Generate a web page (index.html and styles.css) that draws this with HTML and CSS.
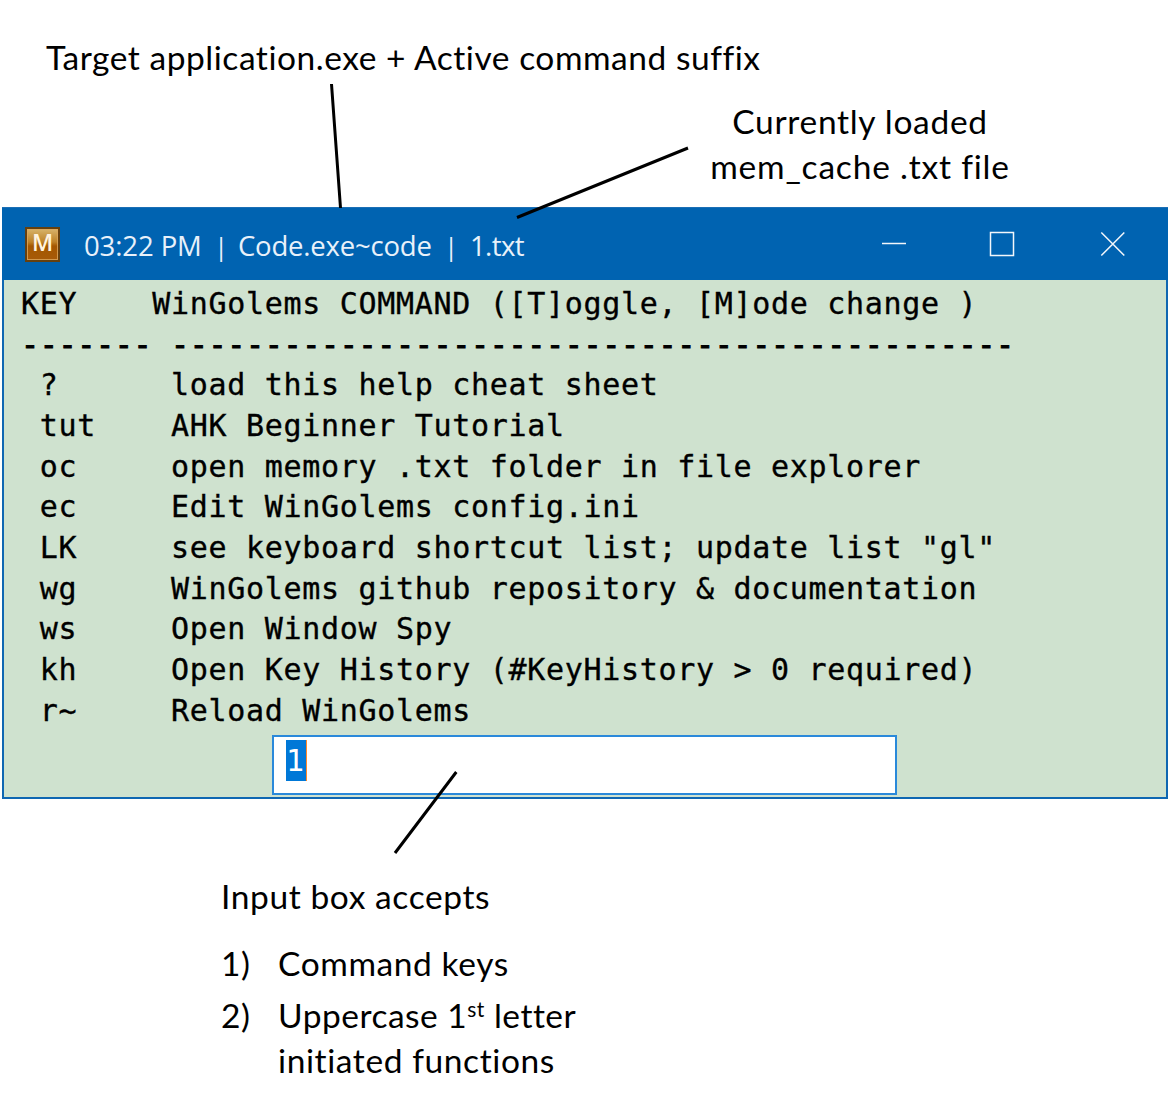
FILE: index.html
```html
<!DOCTYPE html>
<html lang="en">
<head>
<meta charset="utf-8">
<title>WinGolems command window</title>
<link rel="stylesheet" href="styles.css">
</head>
<body>
<main class="figure">
  <header class="notes">
    <p class="note note-target">Target application.exe + Active command suffix</p>
    <p class="note note-file"><span class="loaded">Currently loaded</span><br><span class="cache">mem_cache .txt file</span></p>
  </header>
  <section class="window">
    <div class="titlebar">
      <div class="app-icon">M</div>
      <div class="title"><span class="t-time">03:22 PM</span><span class="t-bar">|</span><span class="t-app">Code.exe~code</span><span class="t-bar">|</span><span class="t-file">1.txt</span></div>
      <svg class="controls" viewBox="0 0 246 26">
        <path d="M0 12.5H24" />
        <rect x="108.5" y="1.5" width="23" height="23"/>
        <path d="M219.3 1.5L242.3 24.5M242.3 1.5L219.3 24.5"/>
      </svg>
    </div>
    <div class="client">
<pre class="commands">KEY    WinGolems COMMAND ([T]oggle, [M]ode change )
<span class="rule">------- ---------------------------------------------</span>
 ?      load this help cheat sheet
 tut    AHK Beginner Tutorial
 oc     open memory .txt folder in file explorer
 ec     Edit WinGolems config.ini
 LK     see keyboard shortcut list; update list "gl"
 wg     WinGolems github repository &amp; documentation
 ws     Open Window Spy
 kh     Open Key History (#KeyHistory &gt; 0 required)
 r~     Reload WinGolems</pre>
      <div class="input"><span class="selected">1</span></div>
    </div>
  </section>
  <footer class="help">
    <p class="note note-input">Input box accepts</p>
    <div class="item"><span class="note num">1)</span><span class="note keys">Command keys</span></div>
    <div class="item"><span class="note num">2)</span><div class="note"><span class="upper">Uppercase 1<sup>st</sup> letter</span><br><span class="functions">initiated functions</span></div></div>
  </footer>
  <svg class="pointers" viewBox="0 0 1168 1106">
    <path d="M331.5 84L340.5 208M688 148L517 217.5M456.3 772L395 853"/>
  </svg>
</main>
</body>
</html>
```
FILE: styles.css
```css
* { box-sizing: border-box; }
body { margin: 0; background: #fff; }
.figure { position: relative; width: 1168px; height: 1106px; overflow: hidden; color: #000; display: flex; flex-direction: column; }
.note { margin: 0; font: 33.5px/45px Lato, "Liberation Sans", sans-serif; letter-spacing: .5px; font-variant-ligatures: none; white-space: nowrap; }
.notes { height: 207px; flex: none; padding-top: 35px; }
.note-target { padding-left: 46px; letter-spacing: .54px; }
.note-file { width: 300px; margin: 19px 0 0 710px; text-align: center; }
.loaded { letter-spacing: .7px; }
.cache { letter-spacing: .8px; }
.keys, .functions { letter-spacing: .6px; }
.window { flex: none; width: 1166px; height: 592px; margin-left: 2px; border: 2px solid #0f67b2; border-top: 0; background: #cfe2cf; }
.titlebar { height: 73px; margin: 0 -2px; background: #0063b1; border-top: 1px solid #1b6fb5; display: flex; align-items: center; padding: 0 40px 0 23px; color: #fff; }
.app-icon { width: 35px; height: 35px; flex: none; border: 2px solid #65400f; background: linear-gradient(#d7b36a, #bd8126 42%, #a35700 55%, #a75a08); box-shadow: inset 0 0 0 1px rgba(220, 167, 94, .8); color: #fff3df; font: 600 23px/26px "Open Sans", sans-serif; text-align: center; }
.title { margin-left: 24px; flex: 1; display: flex; align-items: center; font: 27.5px/40px "Open Sans", "Noto Sans", sans-serif; color: #e8f1fa; white-space: pre; padding-top: 3px; }
.t-time { width: 129px; letter-spacing: -.1px; }
.t-bar { width: 16px; text-align: center; font-size: 25px; }
.t-app { width: 214px; padding-left: 9px; letter-spacing: -.2px; }
.t-file { padding-left: 11px; letter-spacing: -.6px; }
.controls { width: 246px; height: 26px; fill: none; stroke: #f3f7fb; stroke-width: 1.5; }
.client { padding-left: 17px; }
.commands { margin: 0; padding-top: 4px; height: 455px; font: 30px/40.65px "DejaVu Sans Mono", monospace; letter-spacing: .69px; -webkit-text-stroke: .35px #000; }
.rule { -webkit-text-stroke: .9px #000; }
.input { width: 625px; height: 60px; margin-left: 251px; background: #fff; border: 2px solid #2a89da; padding: 3px 12px; }
.selected { display: block; width: 21px; height: 41px; background: #0078d7; color: #fff; font: 30px/42px "DejaVu Sans Mono", monospace; border-right: 1px solid #ff8728; }
.help { padding: 75px 0 0 221px; }
.note-input { margin-bottom: 22px; letter-spacing: .6px; }
.item { display: flex; margin-bottom: 7px; }
.num { width: 57px; flex: none; }
sup { font-size: 21px; line-height: 0; vertical-align: 11px; }
.pointers { position: absolute; inset: 0; width: 1168px; height: 1106px; fill: none; stroke: #000; stroke-width: 3; pointer-events: none; }
```
